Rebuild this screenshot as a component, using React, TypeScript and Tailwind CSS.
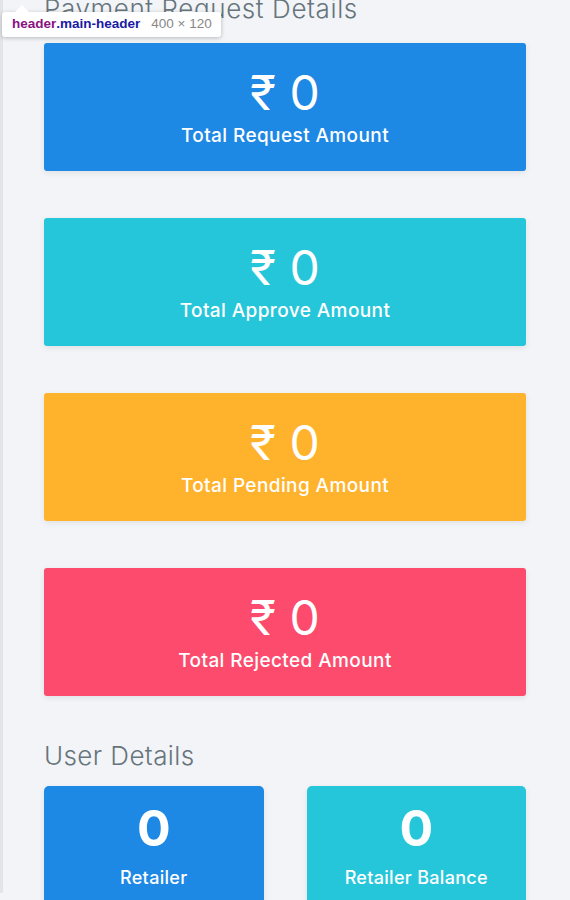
import React from "react";

const payment = [
  { label: "Total Request Amount", bg: "bg-[#1e88e5]" },
  { label: "Total Approve Amount", bg: "bg-[#26c6da]" },
  { label: "Total Pending Amount", bg: "bg-[#ffb22b]" },
  { label: "Total Rejected Amount", bg: "bg-[#fc4b6c]" },
];

const users = [
  { label: "Retailer", bg: "bg-[#1e88e5]" },
  { label: "Retailer Balance", bg: "bg-[#26c6da]" },
];

export default function App() {
  return (
    <div className="relative h-[900px] overflow-hidden bg-[#f2f4f8] font-['Inter','Noto_Sans',sans-serif]">
      <div className="h-[900px] border-l-[3px] border-[#e2e4e8]">
        <div className="pl-[41px] pr-[44px]">
          <h2 className="-mt-[7px] h-[31px] text-[26px] leading-[31px] font-light text-[#67757c] tracking-[0.6px]">
            Payment Request Details
          </h2>
          <div className="mt-[19px] flex flex-col gap-[47px]">
            {payment.map((p) => (
              <div
                key={p.label}
                className={`${p.bg} h-[128px] rounded-[3px] shadow-[0_2px_6px_rgba(0,0,0,0.08)] flex flex-col items-center pt-[22px] text-white`}
              >
                <div className="text-[48px] leading-[56px] font-normal">₹ 0</div>
                <div className="mt-[3px] text-[19px] leading-[24px] font-medium tracking-[0.4px]">{p.label}</div>
              </div>
            ))}
          </div>
          <h2 className="mt-[45px] h-[30px] text-[26px] leading-[30px] font-light text-[#67757c] tracking-[0.4px]">
            User Details
          </h2>
          <div className="mt-[15px] grid grid-cols-2 gap-[43px]">
            {users.map((u) => (
              <div
                key={u.label}
                className={`${u.bg} h-[140px] rounded-[5px] shadow-[0_2px_6px_rgba(0,0,0,0.08)] flex flex-col items-center pt-[12px] text-white`}
              >
                <div className="text-[50px] leading-[60px] font-bold">0</div>
                <div className="mt-[8px] text-[18px] leading-[24px] font-medium tracking-[0.3px]">{u.label}</div>
              </div>
            ))}
          </div>
        </div>
      </div>
      <div className="absolute left-[2px] top-[12px] h-[25px] rounded-[3px] bg-white shadow-[0_1px_4px_rgba(0,0,0,0.25)] flex items-center pl-[10px] pr-[9px] font-['Liberation_Sans',Arial,sans-serif] text-[13.5px]">
        <div className="absolute left-[15px] -top-[5px] h-[10px] w-[10px] rotate-45 bg-white" />
        <span className="relative font-bold text-[#881280]">header</span>
        <span className="relative font-bold text-[#1a1aa6]">.main-header</span>
        <span className="relative ml-[11px] text-[#888888]">400 × 120</span>
      </div>
    </div>
  );
}
